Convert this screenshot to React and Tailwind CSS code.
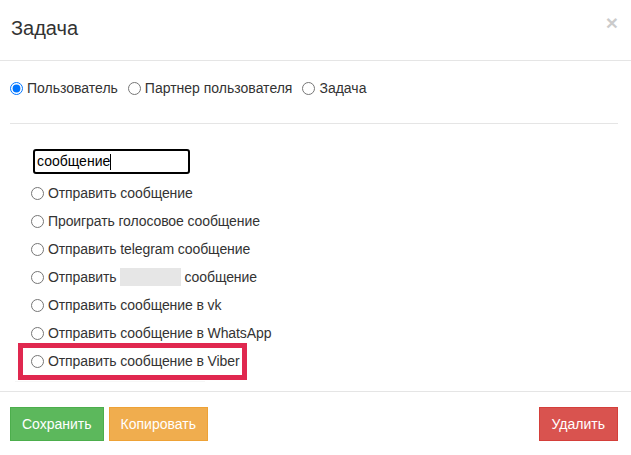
import React from 'react';

const RadioRow = ({ name, label, checked }) => {
    return (
        <label className="flex items-center h-[28px] gap-[4px] text-[14px] text-[#333] whitespace-nowrap tracking-[-0.1px]">
            <input type="radio" name={name} defaultChecked={checked} className="w-[13px] h-[13px] m-0" />
            <span>{label}</span>
        </label>
    );
};

export default function App() {
    const actions = [
        'Отправить сообщение',
        'Проиграть голосовое сообщение',
        'Отправить telegram сообщение',
    ];

    return (
        <div className="w-[631px] h-[455px] bg-white overflow-hidden" style={{ fontFamily: '"Liberation Sans", Arial, sans-serif' }}>
            {/* header */}
            <div className="h-[61px] flex items-start justify-between pl-[11px] pr-[13px] pt-[14px] border-b border-[#e5e5e5]">
                <h4 className="text-[20px] leading-[28px] text-[#333]">Задача</h4>
                <button className="text-[21px] font-bold leading-[14px] text-black opacity-20 mt-[2px]">×</button>
            </div>

            {/* body */}
            <div className="pl-[10px] pr-[13px]">
                <div className="flex items-center gap-[10px] h-[20px] mt-[17px] text-[14px] text-[#333]">
                    <label className="flex items-center gap-[4px]">
                        <input type="radio" name="target" defaultChecked className="w-[13px] h-[13px] m-0" />
                        Пользователь
                    </label>
                    <label className="flex items-center gap-[4px]">
                        <input type="radio" name="target" className="w-[13px] h-[13px] m-0" />
                        Партнер пользователя
                    </label>
                    <label className="flex items-center gap-[4px]">
                        <input type="radio" name="target" className="w-[13px] h-[13px] m-0" />
                        Задача
                    </label>
                </div>
                <div className="h-px bg-[#e5e5e5] mt-[25px]" />

                <div className="pl-[23px] mt-[25px]">
                    <div className="w-[157px] h-[25px] border-2 border-black rounded-[3px] flex items-center pl-[2px] text-[14px] text-black">
                        <span>сообщение</span>
                        <span className="w-px h-[16px] bg-black" />
                    </div>
                </div>

                <div className="pl-[21px] mt-[5px]">
                    {actions.map((a) => (
                        <RadioRow key={a} name="action" label={a} />
                    ))}
                    <label className="flex items-center h-[28px] text-[14px] text-[#333] whitespace-nowrap tracking-[-0.1px]">
                        <input type="radio" name="action" className="w-[13px] h-[13px] m-0 mr-[4px]" />
                        <span>Отправить</span>
                        <span className="w-[61px] h-[18px] bg-[#e6e6e6] ml-[3px] mr-[4px]" />
                        <span>сообщение</span>
                    </label>
                    <RadioRow name="action" label="Отправить сообщение в vk" />
                    <RadioRow name="action" label="Отправить сообщение в WhatsApp" />
                    <div className="-ml-[13px] -mt-[4px] w-[229px] h-[37px] border-[5px] border-[#e0284f] pl-[8px] flex items-center">
                        <RadioRow name="action" label="Отправить сообщение в Viber" />
                    </div>
                </div>
                <div className="ml-[5px] w-[190px] h-px bg-[#f6f6f6] mt-px" />
            </div>

            {/* footer */}
            <div className="mt-[9px] border-t border-[#e5e5e5] pt-[15px] pl-[10px] pr-[13px] flex items-center">
                <button className="h-[34px] px-[11px] border border-[#4cae4c] bg-[#5cb85c] text-white text-[14px]">Сохранить</button>
                <button className="ml-[5px] h-[34px] px-[11px] border border-[#eea236] bg-[#f0ad4e] text-white text-[14px]">Копировать</button>
                <button className="ml-auto h-[34px] px-[12px] border border-[#d43f3a] bg-[#d9534f] text-white text-[14px]">Удалить</button>
            </div>
        </div>
    );
}
